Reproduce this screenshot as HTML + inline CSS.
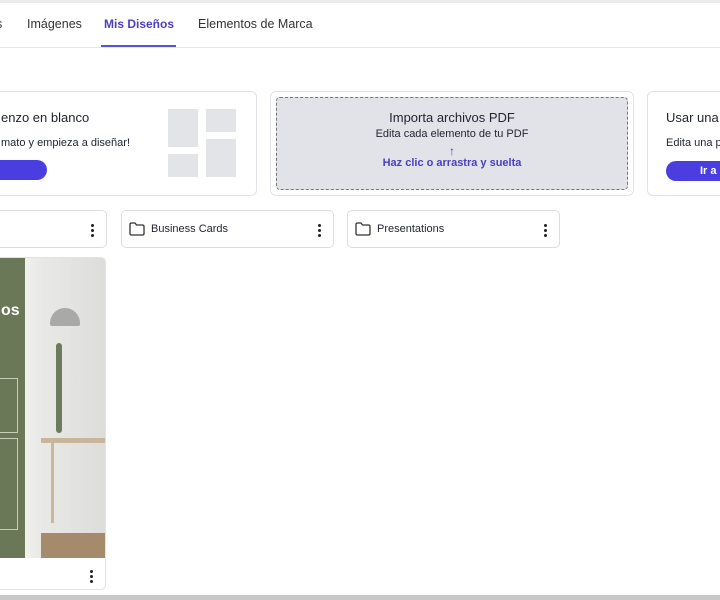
<!DOCTYPE html>
<html><head><meta charset="utf-8"><style>
*{box-sizing:border-box;margin:0;padding:0}
body{width:720px;height:600px;overflow:hidden;background:#fff;font-family:"Liberation Sans",sans-serif;color:#1f2330;position:relative}
.a{position:absolute}
.tab{position:absolute;top:17px;font-size:12.5px;color:#333}
.card{position:absolute;background:#fff;border:1px solid #e2e3e7;border-radius:6px}
.btn{position:absolute;background:#4a3ee0;border-radius:12px;color:#fff;font-size:11px;font-weight:bold}
.gray{position:absolute;background:#e3e4e8}
.fold{position:absolute;top:210px;height:38px;border:1px solid #dcdde1;border-radius:5px;background:#fff;font-size:11px}
.dots{position:absolute;width:3px;top:13px}
.dots i{display:block;width:3px;height:3px;border-radius:50%;background:#222;margin-bottom:2px}
</style></head><body>
<div class="a" style="left:0;top:0;width:720px;height:3px;background:#ececec"></div>
<div class="tab" style="left:-4px">s</div>
<div class="tab" style="left:27px">Imágenes</div>
<div class="tab" style="left:104px;color:#4b3fc0;font-weight:bold;font-size:12px">Mis Diseños</div>
<div class="a" style="left:101px;top:45px;width:75px;height:2px;background:#5b52d0"></div>
<div class="tab" style="left:198px">Elementos de Marca</div>
<div class="a" style="left:0;top:47px;width:720px;height:1px;background:#e6e6ea"></div>

<div class="card" style="left:-10px;top:91px;width:267px;height:105px">
<div class="a" style="left:10px;top:18px;font-size:13px">enzo en blanco</div>
<div class="a" style="left:10px;top:45px;font-size:11px">mato y empieza a diseñar!</div>
<div class="btn" style="left:0;top:68px;width:56px;height:20px"></div>
<div class="gray" style="left:177px;top:17px;width:30px;height:38px"></div>
<div class="gray" style="left:215px;top:17px;width:30px;height:23px"></div>
<div class="gray" style="left:177px;top:62px;width:30px;height:23px"></div>
<div class="gray" style="left:215px;top:47px;width:30px;height:38px"></div>
</div>

<div class="card" style="left:270px;top:91px;width:364px;height:105px">
<div class="a" style="left:5px;top:5px;width:352px;height:93px;background:#e2e3e9;border:1px dashed #777;border-radius:4px;text-align:center">
<div style="margin-top:12px;font-size:13px">Importa archivos PDF</div>
<div style="margin-top:3px;font-size:11px">Edita cada elemento de tu PDF</div>
<div style="margin-top:5px;font-size:12px;line-height:12px;color:#4b3fc0">↑</div>
<div style="font-size:11px;color:#4b3fc0;font-weight:bold">Haz clic o arrastra y suelta</div>
</div></div>

<div class="card" style="left:647px;top:91px;width:90px;height:105px">
<div class="a" style="left:18px;top:18px;font-size:13px;white-space:nowrap">Usar una p</div>
<div class="a" style="left:18px;top:45px;font-size:11px;white-space:nowrap">Edita una p</div>
<div class="btn" style="left:18px;top:69px;width:80px;height:20px;padding:4px 0 0 34px">Ir a</div>
</div>

<div class="fold" style="left:-10px;width:117px"><div class="dots" style="left:100px"><i></i><i></i><i></i></div></div>
<div class="fold" style="left:121px;width:213px">
<svg class="a" style="left:7px;top:11px" width="16" height="14" viewBox="0 0 16 14"><path d="M1 2.5Q1 1 2.5 1H6L7.5 3H13.5Q15 3 15 4.5V11.5Q15 13 13.5 13H2.5Q1 13 1 11.5Z" fill="none" stroke="#333" stroke-width="1.3"/></svg>
<div class="a" style="left:29px;top:12px">Business Cards</div>
<div class="dots" style="left:196px"><i></i><i></i><i></i></div></div>
<div class="fold" style="left:347px;width:213px">
<svg class="a" style="left:7px;top:11px" width="16" height="14" viewBox="0 0 16 14"><path d="M1 2.5Q1 1 2.5 1H6L7.5 3H13.5Q15 3 15 4.5V11.5Q15 13 13.5 13H2.5Q1 13 1 11.5Z" fill="none" stroke="#333" stroke-width="1.3"/></svg>
<div class="a" style="left:29px;top:12px">Presentations</div>
<div class="dots" style="left:196px"><i></i><i></i><i></i></div></div>

<div class="a" style="left:-5px;top:257px;width:111px;height:333px;border:1px solid #e2e3e7;border-radius:5px;background:#fff;overflow:hidden">
<div class="a" style="left:0;top:0;width:111px;height:300px;background:linear-gradient(90deg,#6b7858 0,#6b7858 29px,#f0f0ee 29px,#e9e9e6 45px,#dcdcda 100%)"></div>
<div class="a" style="left:5px;top:44px;color:#fff;font-size:16px;font-weight:bold">os</div>
<div class="a" style="left:0;top:120px;width:22px;height:55px;border:1px solid #c8cfb8"></div>
<div class="a" style="left:0;top:180px;width:22px;height:92px;border:1px solid #c8cfb8"></div>
<div class="a" style="left:54px;top:50px;width:30px;height:18px;background:#a9a9a6;border-radius:15px 15px 2px 2px"></div>
<div class="a" style="left:45px;top:180px;width:65px;height:5px;background:#c9b59a"></div>
<div class="a" style="left:55px;top:185px;width:3px;height:80px;background:#cbb89a"></div>
<div class="a" style="left:45px;top:275px;width:66px;height:25px;background:#a58a6c"></div>
<div class="a" style="left:60px;top:85px;width:6px;height:90px;background:#6d7a5e;border-radius:3px"></div>
<div class="dots" style="left:94px;top:312px"><i></i><i></i><i></i></div>
</div>
<div class="a" style="left:0;top:595px;width:720px;height:5px;background:#c8c8c8"></div>
</body></html>
